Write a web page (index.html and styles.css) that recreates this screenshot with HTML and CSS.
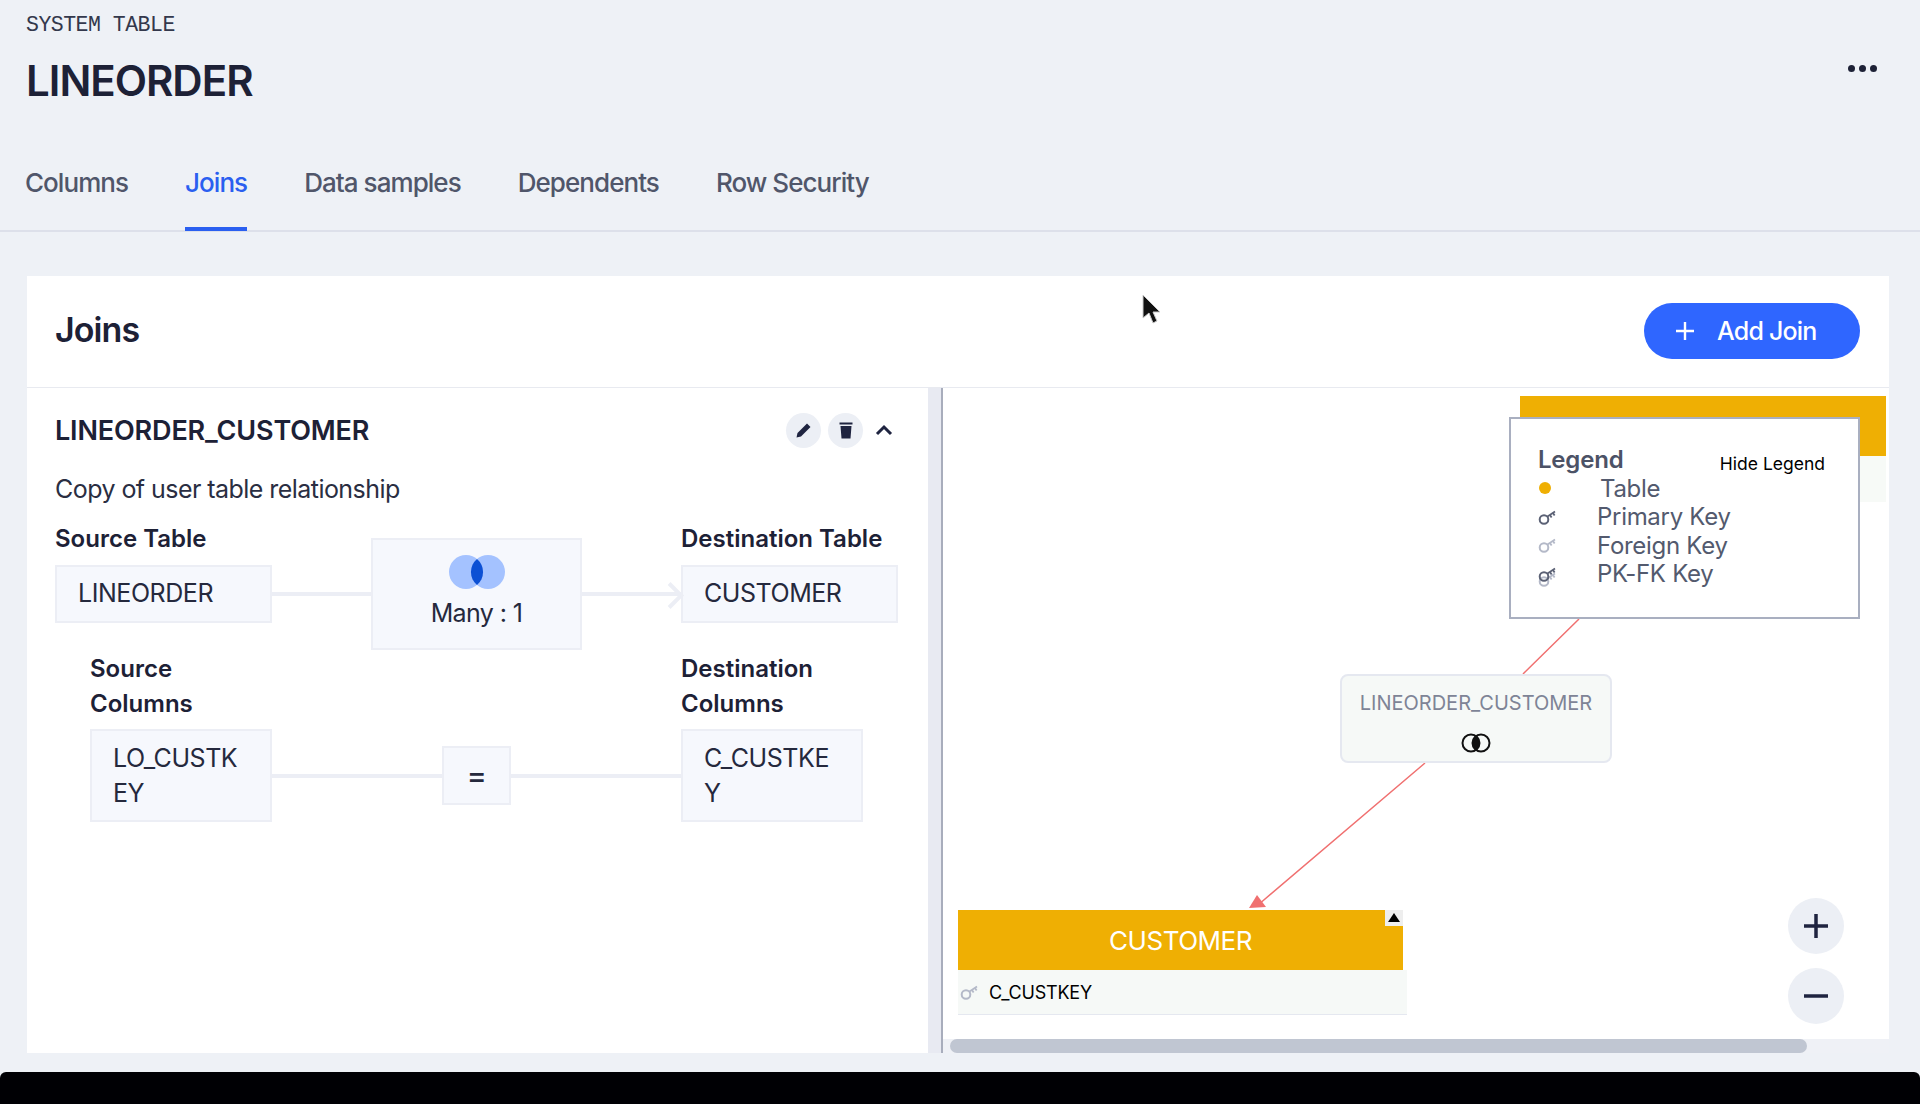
FILE: index.html
```html
<!DOCTYPE html>
<html lang="en">

<head>
    <meta charset="UTF-8">
    <title>LINEORDER - Joins</title>
    <link rel="stylesheet" href="styles.css">
</head>

<body>
    <svg class="defs" width="0" height="0">
        <symbol id="key" viewBox="0 0 18 18">
            <circle cx="6" cy="11.500" r="4.300" fill="none" stroke="currentColor" stroke-width="2" />
            <path d="M9.500 8.500 17 3.500M12 7l1.600 2.500M15 5l1.600 2.500" fill="none" stroke="currentColor" stroke-width="1.800" />
        </symbol>
    </svg>

    <header class="page-head">
        <div class="eyebrow">SYSTEM TABLE</div>
        <div class="title-row">
            <h1>LINEORDER</h1>
            <div class="more"><span></span><span></span><span></span></div>
        </div>
    </header>

    <nav class="tabs">
        <a>Columns</a>
        <a class="active">Joins</a>
        <a>Data samples</a>
        <a>Dependents</a>
        <a>Row Security</a>
    </nav>

    <main class="content">
        <section class="card">
            <div class="card-head">
                <h2>Joins</h2>
                <button class="add-btn">
                    <svg width="20" height="20" viewBox="0 0 20 20">
                        <path d="M10 1v18M1 10h18" stroke="#fff" stroke-width="2.400" />
                    </svg>
                    Add Join
                </button>
            </div>

            <div class="card-body">
                <div class="join-panel">
                    <div class="join-head">
                        <h3>LINEORDER_CUSTOMER</h3>
                        <div class="join-actions">
                            <span class="round-btn">
                                <svg width="18" height="18" viewBox="0 0 18 18">
                                    <path d="M1.500 16.500l1-4.500L12 2.500l3.500 3.500L6 15.500z" fill="#1f2440" />
                                </svg>
                            </span>
                            <span class="round-btn">
                                <svg width="16" height="18" viewBox="0 0 16 18">
                                    <path d="M1.500 1.500h13v2h-13zM2.500 5h11l-1 12.500h-9z" fill="#1f2440" />
                                </svg>
                            </span>
                            <svg class="chevron" width="18" height="12" viewBox="0 0 18 12">
                                <path d="M2 10l7-7 7 7" fill="none" stroke="#1f2440" stroke-width="3" />
                            </svg>
                        </div>
                    </div>
                    <p class="join-desc">Copy of user table relationship</p>

                    <div class="table-grid">
                        <div class="label src-label">Source Table</div>
                        <div class="label dst-label">Destination Table</div>
                        <div class="box src-box">LINEORDER</div>
                        <div class="line line-left"></div>
                        <div class="box type-box">
                            <svg width="56" height="34" viewBox="0 0 56 34">
                                <circle cx="17" cy="17" r="17" fill="#a4c2ff" />
                                <circle cx="39" cy="17" r="17" fill="#a4c2ff" />
                                <path d="M28 4a17 17 0 0 1 0 26a17 17 0 0 1 0-26z" fill="#0c50d4" />
                            </svg>
                            <span>Many : 1</span>
                        </div>
                        <div class="line line-right"></div>
                        <div class="box dst-box">CUSTOMER</div>
                    </div>

                    <div class="column-grid">
                        <div class="column-side src-side">
                            <div class="label">Source Columns</div>
                            <div class="box column-box">LO_CUSTKEY</div>
                        </div>
                        <div class="column-link">
                            <div class="line"></div>
                            <div class="box equals">=</div>
                            <div class="line"></div>
                        </div>
                        <div class="column-side">
                            <div class="label">Destination Columns</div>
                            <div class="box column-box">C_CUSTKEY</div>
                        </div>
                    </div>
                </div>

                <div class="splitter"></div>

                <div class="graph">
                    <div class="canvas">
                        <div class="node-table top-table"></div>
                        <div class="top-table-row"></div>

                        <svg class="edges" width="944" height="651">
                            <path d="M636 231 580 286M482 375 315 517" stroke="#f07070" stroke-width="1.500" fill="none" />
                            <path d="M314 507 306 520 323 519z" fill="#f07070" />
                        </svg>

                        <div class="join-node">
                            <span>LINEORDER_CUSTOMER</span>
                            <svg width="30" height="20" viewBox="0 0 30 20">
                                <path d="M15 3a9 9 0 0 1 0 14a9 9 0 0 1 0-14z" fill="#111" />
                                <circle cx="10" cy="10" r="8.500" fill="none" stroke="#111" stroke-width="2" />
                                <circle cx="20" cy="10" r="8.500" fill="none" stroke="#111" stroke-width="2" />
                            </svg>
                        </div>

                        <div class="node-table customer-table">
                            <div class="node-title">
                                CUSTOMER
                                <span class="collapse"></span>
                            </div>
                            <div class="node-row">
                                <svg class="key fk" width="18" height="18"><use href="#key" /></svg>
                                C_CUSTKEY
                            </div>
                        </div>

                        <div class="legend">
                            <div class="legend-head">
                                <strong>Legend</strong>
                                <span>Hide Legend</span>
                            </div>
                            <div class="legend-row table-row"><i class="dot"></i>Table</div>
                            <div class="legend-row">
                                <svg class="key pk" width="18" height="18"><use href="#key" /></svg>
                                Primary Key
                            </div>
                            <div class="legend-row">
                                <svg class="key fk" width="18" height="18"><use href="#key" /></svg>
                                Foreign Key
                            </div>
                            <div class="legend-row">
                                <span class="key-pair">
                                    <svg class="key fk" width="18" height="18"><use href="#key" /></svg>
                                    <svg class="key pk" width="18" height="18"><use href="#key" /></svg>
                                </span>
                                PK-FK Key
                            </div>
                        </div>

                        <span class="zoom-btn zoom-in">
                            <svg width="26" height="26" viewBox="0 0 26 26">
                                <path d="M13 1v24M1 13h24" stroke="#1f2440" stroke-width="3.500" />
                            </svg>
                        </span>
                        <span class="zoom-btn zoom-out">
                            <svg width="26" height="26" viewBox="0 0 26 26">
                                <path d="M1 13h24" stroke="#1f2440" stroke-width="3.500" />
                            </svg>
                        </span>
                    </div>
                    <div class="scroll-track"><div class="scroll-thumb"></div></div>
                </div>
            </div>

            <svg class="cursor" width="22" height="32" viewBox="0 0 22 32">
                <path d="M2 1v23l6-5 4 10 4-2-4-9h7z" fill="#111" stroke="#ccc" stroke-width="1" />
            </svg>
        </section>
    </main>

    <footer class="black-bar"></footer>
</body>

</html>
```

FILE: styles.css
```css
* {
    box-sizing: border-box;
}

html,
body {
    height: 100%;
}

body {
    margin: 0;
    display: flex;
    flex-direction: column;
    overflow: hidden;
    background-color: #eef1f6;
    color: #1d2136;
    font-family: Inter, "Noto Sans", sans-serif;
}

.defs {
    position: absolute;
}

h1,
h2,
h3,
p {
    margin: 0;
}

/* page header */
.page-head {
    padding: 13px 43px 0 26px;
}

.eyebrow {
    font-family: "Liberation Mono", monospace;
    font-size: 21.500px;
    line-height: 24px;
    letter-spacing: -0.500px;
    color: #33384c;
}

.title-row {
    display: flex;
    justify-content: space-between;
    align-items: center;
    margin-top: 18px;
}

h1 {
    font-size: 42px;
    line-height: 52px;
    font-weight: 600;
    letter-spacing: -1px;
}

.more {
    display: flex;
    gap: 4px;
    margin-top: -26px;
}

.more span {
    width: 7px;
    height: 7px;
    border-radius: 50%;
    background-color: #1d2136;
}

/* tabs */
.tabs {
    display: flex;
    gap: 57px;
    height: 98px;
    margin-top: 27px;
    padding-left: 25px;
    border-bottom: 2px solid #dde0ea;
    font-size: 26px;
    font-weight: 500;
    color: #50566a;
}

.tabs a {
    height: 97px;
    padding-top: 33px;
    line-height: 32px;
    letter-spacing: -0.950px;
}

.tabs a.active {
    color: #2a5ff0;
    border-bottom: 4px solid #2a5ff0;
}

/* card */
.content {
    flex: 1;
    min-height: 0;
    padding: 44px 31px 19px 27px;
}

.card {
    position: relative;
    height: 100%;
    display: flex;
    flex-direction: column;
    background-color: #fff;
}

.card-head {
    flex: none;
    height: 112px;
    padding: 27px 29px 0 28px;
    display: flex;
    justify-content: space-between;
    align-items: flex-start;
    border-bottom: 1px solid #e8eaf0;
}

h2 {
    margin-top: 5px;
    font-size: 34px;
    line-height: 44px;
    font-weight: 600;
    letter-spacing: -0.900px;
}

.add-btn {
    width: 216px;
    height: 56px;
    display: flex;
    align-items: center;
    gap: 22px;
    padding: 0 0 0 31px;
    border: none;
    border-radius: 28px;
    background-color: #2f66ff;
    color: #fff;
    font-family: inherit;
    font-size: 25px;
    font-weight: 500;
    letter-spacing: -0.800px;
}

.card-body {
    flex: 1;
    min-height: 0;
    display: flex;
}

/* left panel */
.join-panel {
    flex: none;
    width: 901px;
    padding: 0 30px 0 28px;
}

.join-head {
    height: 84px;
    display: flex;
    justify-content: space-between;
    align-items: center;
}

h3 {
    font-size: 27px;
    font-weight: 600;
    letter-spacing: -0.150px;
}

.join-actions {
    display: flex;
    align-items: center;
    gap: 7px;
}

.round-btn {
    width: 35px;
    height: 35px;
    display: flex;
    justify-content: center;
    align-items: center;
    border-radius: 50%;
    background-color: #eceff5;
}

.chevron {
    margin: 0 5px;
}

.join-desc {
    font-size: 25px;
    line-height: 34px;
    letter-spacing: -0.550px;
    color: #2a2e42;
}

.label {
    font-size: 24px;
    line-height: 35px;
    font-weight: 600;
}

.box {
    background-color: #f6f8fd;
    border: 2px solid #eceef5;
    font-size: 25px;
    line-height: 35px;
    letter-spacing: -0.450px;
    color: #25293d;
}

.line {
    height: 4px;
    background-color: #eceef5;
}

.table-grid {
    display: grid;
    grid-template-columns: 217px 99px 211px 99px 217px;
    grid-template-rows: 17px 27px 58px 27px;
    margin-top: 15px;
}

.src-label {
    grid-column: 1;
    grid-row: 1 / 3;
}

.dst-label {
    grid-column: 5;
    grid-row: 1 / 3;
    white-space: nowrap;
}

.src-box,
.dst-box {
    padding: 9px 21px;
}

.src-box {
    grid-column: 1;
    grid-row: 3;
}

.dst-box {
    grid-column: 5;
    grid-row: 3;
}

.line-left {
    grid-column: 2;
    grid-row: 3;
    align-self: center;
}

.line-right {
    position: relative;
    grid-column: 4;
    grid-row: 3;
    align-self: center;
}

.line-right::after {
    content: "";
    position: absolute;
    right: 1px;
    top: -6px;
    width: 15px;
    height: 15px;
    border-top: 4px solid #eceef5;
    border-right: 4px solid #eceef5;
    transform: rotate(45deg);
}

.type-box {
    grid-column: 3;
    grid-row: 2 / 5;
    display: flex;
    flex-direction: column;
    align-items: center;
    padding-top: 15px;
    gap: 7px;
    text-align: center;
    letter-spacing: -0.600px;
}

.column-grid {
    display: grid;
    grid-template-columns: 217px 409px 217px;
    margin-top: 1px;
}

.src-side {
    padding-left: 35px;
}

.column-side {
    width: 217px;
}

.column-side .label {
    padding-bottom: 8px;
    width: 182px;
}

.column-box {
    width: 182px;
    height: 93px;
    padding: 10px 21px;
    overflow-wrap: anywhere;
}

.column-link {
    align-self: end;
    height: 93px;
    display: flex;
    align-items: center;
}

.column-link .line {
    flex: 1;
}

.equals {
    width: 69px;
    height: 59px;
    display: flex;
    justify-content: center;
    align-items: center;
    font-size: 30px;
    font-weight: 500;
}

.splitter {
    flex: none;
    width: 15px;
    background-color: #e8eaf2;
    border-right: 2px solid #a8adbc;
}

/* join graph */
.graph {
    flex: 1;
    min-width: 0;
    display: flex;
    flex-direction: column;
}

.canvas {
    position: relative;
    flex: 1;
    overflow: hidden;
    background-color: #fff;
}

.edges {
    position: absolute;
    left: 0;
    top: 0;
}

.top-table {
    position: absolute;
    left: 577px;
    top: 8px;
    width: 366px;
    height: 60px;
    background-color: #efaf03;
}

.top-table-row {
    position: absolute;
    left: 577px;
    top: 68px;
    width: 366px;
    height: 46px;
    background-color: #f7faf7;
}

.join-node {
    position: absolute;
    left: 397px;
    top: 286px;
    width: 272px;
    height: 89px;
    display: flex;
    flex-direction: column;
    align-items: center;
    gap: 18px;
    padding-top: 15px;
    background-color: #f6f9f7;
    border: 2px solid #e5e8f0;
    border-radius: 8px;
    font-size: 20px;
    line-height: 24px;
    color: #7e8496;
}

.customer-table {
    position: absolute;
    left: 15px;
    top: 522px;
    width: 449px;
}

.node-title {
    position: relative;
    width: 445px;
    height: 60px;
    display: flex;
    justify-content: center;
    align-items: center;
    background-color: #efaf03;
    color: #fff;
    font-size: 26px;
    letter-spacing: -0.500px;
}

.collapse {
    position: absolute;
    right: 0;
    top: 0;
    width: 18px;
    height: 16px;
    background-color: #eeeeee;
}

.collapse::after {
    content: "";
    position: absolute;
    left: 3px;
    top: 3px;
    border-left: 6px solid transparent;
    border-right: 6px solid transparent;
    border-bottom: 9px solid #000;
}

.node-row {
    height: 45px;
    display: flex;
    align-items: center;
    gap: 11px;
    padding-left: 2px;
    background-color: #f6f9f7;
    border-bottom: 1px solid #e5e8f0;
    font-size: 18px;
    letter-spacing: -0.200px;
    color: #000;
}

.key.pk {
    color: #5b6175;
}

.key.fk {
    color: #b4b9c8;
}

.legend {
    position: absolute;
    left: 566px;
    top: 29px;
    width: 351px;
    height: 202px;
    padding: 26px 33px 0 27px;
    background-color: #fff;
    border: 2px solid #a9afc0;
    color: #535a6e;
    font-size: 24px;
    line-height: 29px;
}

.legend-head {
    display: flex;
    justify-content: space-between;
    align-items: flex-end;
}

.legend-head strong {
    font-size: 24px;
    font-weight: 600;
    letter-spacing: -0.200px;
    color: #4c5266;
}

.legend-head span {
    margin-bottom: -2px;
    font-size: 17.500px;
    line-height: 24px;
    color: #000;
}

.legend-row {
    height: 28.500px;
    display: flex;
    align-items: center;
    gap: 41px;
    letter-spacing: -0.300px;
}

.legend-row.table-row {
    gap: 49px;
}

.dot {
    width: 12px;
    height: 12px;
    margin-left: 1px;
    border-radius: 50%;
    background-color: #efaf03;
}

.key-pair {
    position: relative;
    width: 18px;
    height: 18px;
}

.key-pair .key {
    position: absolute;
    left: 0;
    top: 0;
}

.key-pair .key.fk {
    top: 5px;
}

.zoom-btn {
    position: absolute;
    left: 845px;
    width: 56px;
    height: 56px;
    display: flex;
    justify-content: center;
    align-items: center;
    border-radius: 50%;
    background-color: #eceff5;
}

.zoom-in {
    top: 510px;
}

.zoom-out {
    top: 580px;
}

.scroll-track {
    flex: none;
    height: 14px;
    background-color: #eff1f6;
}

.scroll-thumb {
    width: 857px;
    height: 14px;
    margin-left: 7px;
    border-radius: 7px;
    background-color: #c0c6d2;
}

.cursor {
    position: absolute;
    left: 1114px;
    top: 18px;
}

.black-bar {
    flex: none;
    height: 32px;
    background-color: #000004;
    border-radius: 6px 6px 0 0;
}
```
